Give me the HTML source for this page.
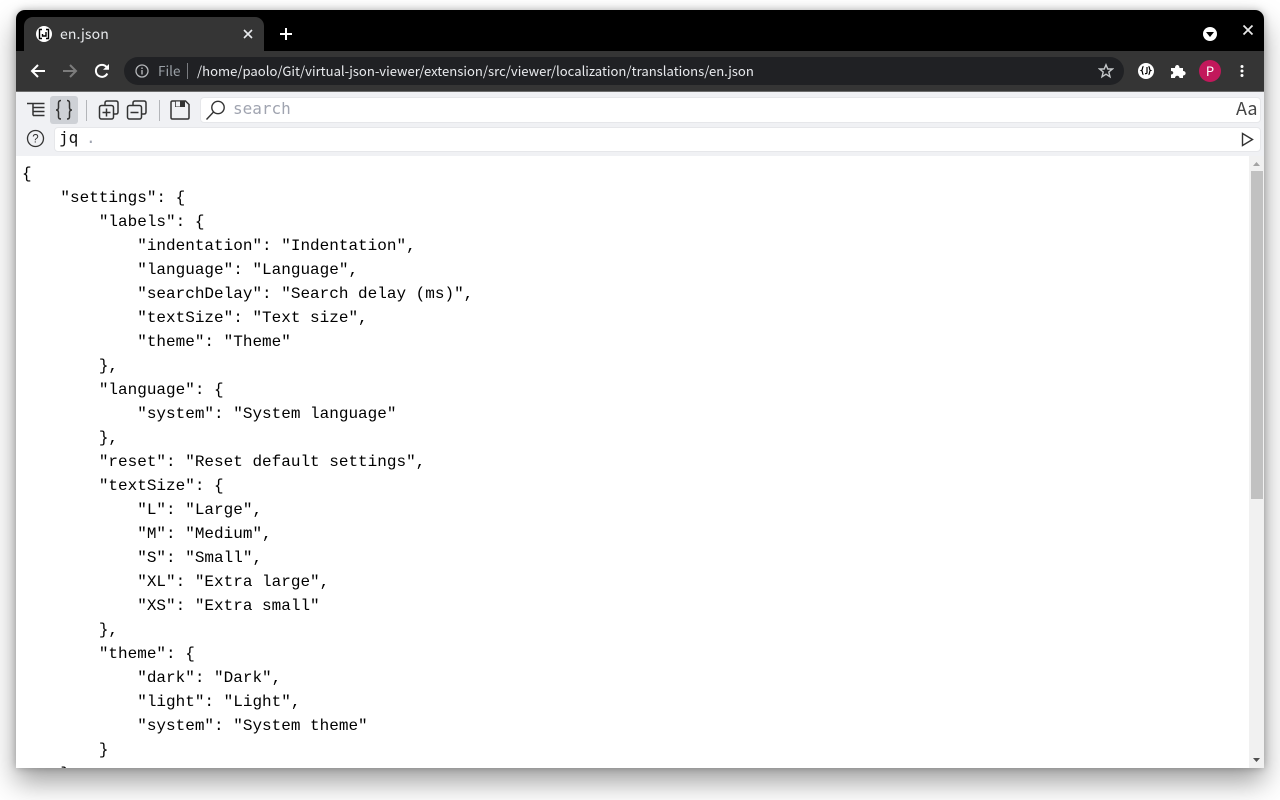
<!DOCTYPE html>
<html><head><meta charset="utf-8"><style>
html,body{margin:0;padding:0;width:1280px;height:800px;background:#fff;overflow:hidden}
div,svg,span{position:absolute;box-sizing:border-box}
#win{left:16px;top:10px;width:1248px;height:758px;background:#000;border-radius:9px 9px 0 0;box-shadow:0 14px 28px rgba(0,0,0,.38),0 0 8px rgba(0,0,0,.25);overflow:hidden}
.ui{font-family:"Noto Sans CJK SC","Liberation Sans",sans-serif;white-space:pre}
pre{position:absolute;margin:0;left:6px;top:151px;font:16px/24px "Liberation Mono",monospace;color:#000}
</style></head><body>
<div id="win">
<div style="left:8px;top:7px;width:240px;height:34px;background:#353535;border-radius:9px 9px 0 0"></div>
<div style="left:0;top:41px;width:1248px;height:40px;background:#353535"></div>
<div style="left:0;top:81px;width:1248px;height:1px;background:#6d6d6d"></div>
<!-- tab -->
<svg style="left:20px;top:16px" width="16" height="16" viewBox="0 0 16 16"><circle cx="8" cy="8" r="8" fill="#fff"/><path d="M6 3.500H3.500V12.500H6M10 3.500H12.500V12.500H10M10 6V10H6.500V8" fill="none" stroke="#000" stroke-width="1.400"/></svg>
<div class="ui" style="left:44px;top:14px;font-size:14px;line-height:21px;letter-spacing:.12px;color:#e8eaed">en.json</div>
<svg style="left:226px;top:18px" width="12" height="12" viewBox="0 0 12 12"><path d="M2 2L10 10M10 2L2 10" stroke="#e8eaed" stroke-width="1.600"/></svg>
<svg style="left:263px;top:17px" width="14" height="14" viewBox="0 0 14 14"><path d="M7 1V13M1 7H13" stroke="#fff" stroke-width="2"/></svg>
<svg style="left:1187px;top:17px" width="14" height="14" viewBox="0 0 14 14"><circle cx="7" cy="7" r="7" fill="#fff"/><path d="M3 5H11L7 10Z" fill="#000"/></svg>
<svg style="left:1226px;top:14px" width="12" height="12" viewBox="0 0 12 12"><path d="M1.500 1.500L10.500 10.500M10.500 1.500L1.500 10.500" stroke="#e8e8e8" stroke-width="1.800"/></svg>
<!-- nav -->
<svg style="left:14px;top:53px" width="16" height="16" viewBox="0 0 16 16"><path d="M15 8H2M8 2L2 8L8 14" fill="none" stroke="#fff" stroke-width="2"/></svg>
<svg style="left:46px;top:53px" width="16" height="16" viewBox="0 0 16 16"><path d="M1 8H14M8 2L14 8L8 14" fill="none" stroke="#7c7c7c" stroke-width="2"/></svg>
<svg style="left:78px;top:53px" width="16" height="16" viewBox="0 0 16 16"><path d="M13.300 10.500A6 6 0 1 1 12.500 4" fill="none" stroke="#fff" stroke-width="2"/><path d="M9 6.800H15V1Z" fill="#fff"/></svg>
<!-- omnibox -->
<div style="left:108px;top:47px;width:1000px;height:28px;border-radius:14px;background:#202124"></div>
<svg style="left:119px;top:54px" width="14" height="14" viewBox="0 0 14 14"><circle cx="7" cy="7" r="6" fill="none" stroke="#b4b6b9" stroke-width="1.300"/><path d="M7 6V10.500M7 3.500V5" stroke="#b4b6b9" stroke-width="1.400"/></svg>
<div class="ui" style="left:142px;top:50px;font-size:13.500px;line-height:20px;color:#9aa0a6">File</div>
<div style="left:171px;top:53px;width:1px;height:16px;background:#7a7c80"></div>
<div class="ui" style="left:181px;top:51px;font-size:13.100px;line-height:20px;letter-spacing:-.002px;color:#e8eaed">/home/paolo/Git/virtual-json-viewer/extension/src/viewer/localization/translations/en.json</div>
<svg style="left:1082px;top:53px" width="16" height="16" viewBox="0 0 16 16"><path d="M8 1.800L9.800 6H14.400L10.800 9L12 13.800L8 11.200L4 13.800L5.200 9L1.600 6H6.200Z" fill="none" stroke="#c4c7c9" stroke-width="1.400"/></svg>
<svg style="left:1122px;top:53px" width="16" height="16" viewBox="0 0 16 16"><circle cx="8" cy="8" r="8" fill="#fff"/><path d="M5.500 3.500C4 3.500 5 7 3.500 7.500C5 8 4 11.500 5.500 11.500M10.500 3.500C12 3.500 11 7 12.500 7.500C11 8 12 11.500 10.500 11.500M9 4V9.500Q9 11 7 10.500" fill="none" stroke="#000" stroke-width="1.200"/></svg>
<svg style="left:1154px;top:53px" width="16" height="16" viewBox="0 0 16 16"><path d="M1 5H5C5 1 9.500 1 9.500 5H13V8C16.500 8 16.500 12.500 13 12.500V15H9.500C9.500 12 5 12 5 15H1V11.500C4 11.500 4 8 1 8Z" fill="#fff"/></svg>
<div style="left:1183px;top:50px;width:22px;height:22px;border-radius:50%;background:#c2185b"></div>
<div class="ui" style="left:1183px;top:50px;width:22px;text-align:center;font-size:13px;line-height:22px;color:#fff">P</div>
<svg style="left:1224px;top:54px" width="4" height="14" viewBox="0 0 4 14"><circle cx="2" cy="2.500" r="1.500" fill="#fff"/><circle cx="2" cy="7" r="1.500" fill="#fff"/><circle cx="2" cy="11.500" r="1.500" fill="#fff"/></svg>
<!-- ext toolbar -->
<div style="left:0;top:82px;width:1248px;height:64px;background:#f0f1f4"></div>
<div style="left:34px;top:86px;width:28px;height:28px;border-radius:3px;background:#ced1d6"></div>
<svg style="left:9px;top:90px" width="22" height="20" viewBox="0 0 22 20"><path d="M2 3.500H19.500M8 7.500H19.500M8 11.500H19.500M8 15.500H19.500M8 3.500V15.500" fill="none" stroke="#333" stroke-width="1.500"/></svg>
<svg style="left:37px;top:89px" width="22" height="22" viewBox="0 0 22 22"><path d="M8 1.500Q5.500 1.500 5.500 4V8.500Q5.500 11 3 11Q5.500 11 5.500 13.500V18Q5.500 20 8 20M14 1.500Q16.500 1.500 16.500 4V8.500Q16.500 11 19 11Q16.500 11 16.500 13.500V18Q16.500 20 14 20" fill="none" stroke="#333" stroke-width="1.500"/></svg>
<div style="left:70px;top:90px;width:1px;height:21px;background:#b3b5b9"></div>
<svg style="left:82px;top:89px" width="22" height="22" viewBox="0 0 22 22"><path d="M7 6V4Q7 2 9 2H18Q20 2 20 4V13Q20 15 18 15H16" fill="none" stroke="#333" stroke-width="1.500"/><rect x="1.500" y="6.500" width="14" height="13.500" rx="2" fill="none" stroke="#333" stroke-width="1.500"/><path d="M4.500 13.500H12.500M8.500 9.500V17.500" stroke="#333" stroke-width="1.500"/></svg>
<svg style="left:110px;top:89px" width="22" height="22" viewBox="0 0 22 22"><path d="M7 6V4Q7 2 9 2H18Q20 2 20 4V13Q20 15 18 15H16" fill="none" stroke="#333" stroke-width="1.500"/><rect x="1.500" y="6.500" width="14" height="13.500" rx="2" fill="none" stroke="#333" stroke-width="1.500"/><path d="M4.500 13.500H12.500" stroke="#333" stroke-width="1.500"/></svg>
<div style="left:143px;top:90px;width:1px;height:21px;background:#b3b5b9"></div>
<svg style="left:154px;top:90px" width="20" height="20" viewBox="0 0 20 20"><path d="M1 2.500Q1 1 2.500 1H15.500L19 4.500V17.500Q19 19 17.500 19H2.500Q1 19 1 17.500Z" fill="none" stroke="#333" stroke-width="1.500"/><rect x="5" y="1" width="10" height="6" fill="#333"/><rect x="5.800" y="1.500" width="4.200" height="5" fill="#f0f1f4"/></svg>
<!-- search -->
<div style="left:184px;top:87px;width:1061px;height:26px;background:#fff;border-radius:4px;border:1px solid #e6e7ea"></div>
<svg style="left:189px;top:89px" width="22" height="22" viewBox="0 0 22 22"><circle cx="13" cy="8.500" r="6.200" fill="none" stroke="#333" stroke-width="1.400"/><path d="M8.500 13L1.500 20.500" stroke="#333" stroke-width="1.400"/></svg>
<div style="left:217px;top:87px;font:16px/24px 'DejaVu Sans Mono',monospace;color:#a0a4b0;white-space:pre">search</div>
<div class="ui" style="left:1220px;top:84px;font-size:18px;line-height:28px;color:#444">Aa</div>
<!-- jq -->
<svg style="left:10px;top:119px" width="19" height="19" viewBox="0 0 19 19"><circle cx="9.500" cy="9.500" r="8" fill="none" stroke="#333" stroke-width="1.300"/><text x="9.500" y="13.500" text-anchor="middle" font-family="Liberation Sans" font-size="11.500" fill="#333">?</text></svg>
<div style="left:38px;top:117px;width:1207px;height:25px;background:#fff;border-radius:4px;border:1px solid #e6e7ea"></div>
<div style="left:43px;top:116px;font:16px/24px 'DejaVu Sans Mono',monospace;color:#111;white-space:pre">jq</div>
<div style="left:70px;top:116px;font:16px/24px 'DejaVu Sans Mono',monospace;color:#a0a4b0;white-space:pre">.</div>
<svg style="left:1225px;top:122px" width="13" height="15" viewBox="0 0 13 15"><path d="M1.500 1.500L11.500 7.500L1.500 13.500Z" fill="none" stroke="#333" stroke-width="1.400"/></svg>
<!-- content -->
<div style="left:0;top:146px;width:1248px;height:612px;background:#fff;overflow:hidden">
<pre style="top:6px">{
    "settings": {
        "labels": {
            "indentation": "Indentation",
            "language": "Language",
            "searchDelay": "Search delay (ms)",
            "textSize": "Text size",
            "theme": "Theme"
        },
        "language": {
            "system": "System language"
        },
        "reset": "Reset default settings",
        "textSize": {
            "L": "Large",
            "M": "Medium",
            "S": "Small",
            "XL": "Extra large",
            "XS": "Extra small"
        },
        "theme": {
            "dark": "Dark",
            "light": "Light",
            "system": "System theme"
        }
    },
</pre>
<div style="left:1233px;top:0;width:15px;height:612px;background:#f1f1f1"></div>
<div style="left:1235px;top:15px;width:12px;height:328px;background:#c1c1c1"></div>
<svg style="left:1236px;top:5px" width="9" height="6" viewBox="0 0 9 6"><path d="M4.500 1L8 5H1Z" fill="#a3a3a3"/></svg>
<svg style="left:1236px;top:601px" width="9" height="6" viewBox="0 0 9 6"><path d="M1 1H8L4.500 5Z" fill="#505050"/></svg>
</div>
</div>
</body></html>
